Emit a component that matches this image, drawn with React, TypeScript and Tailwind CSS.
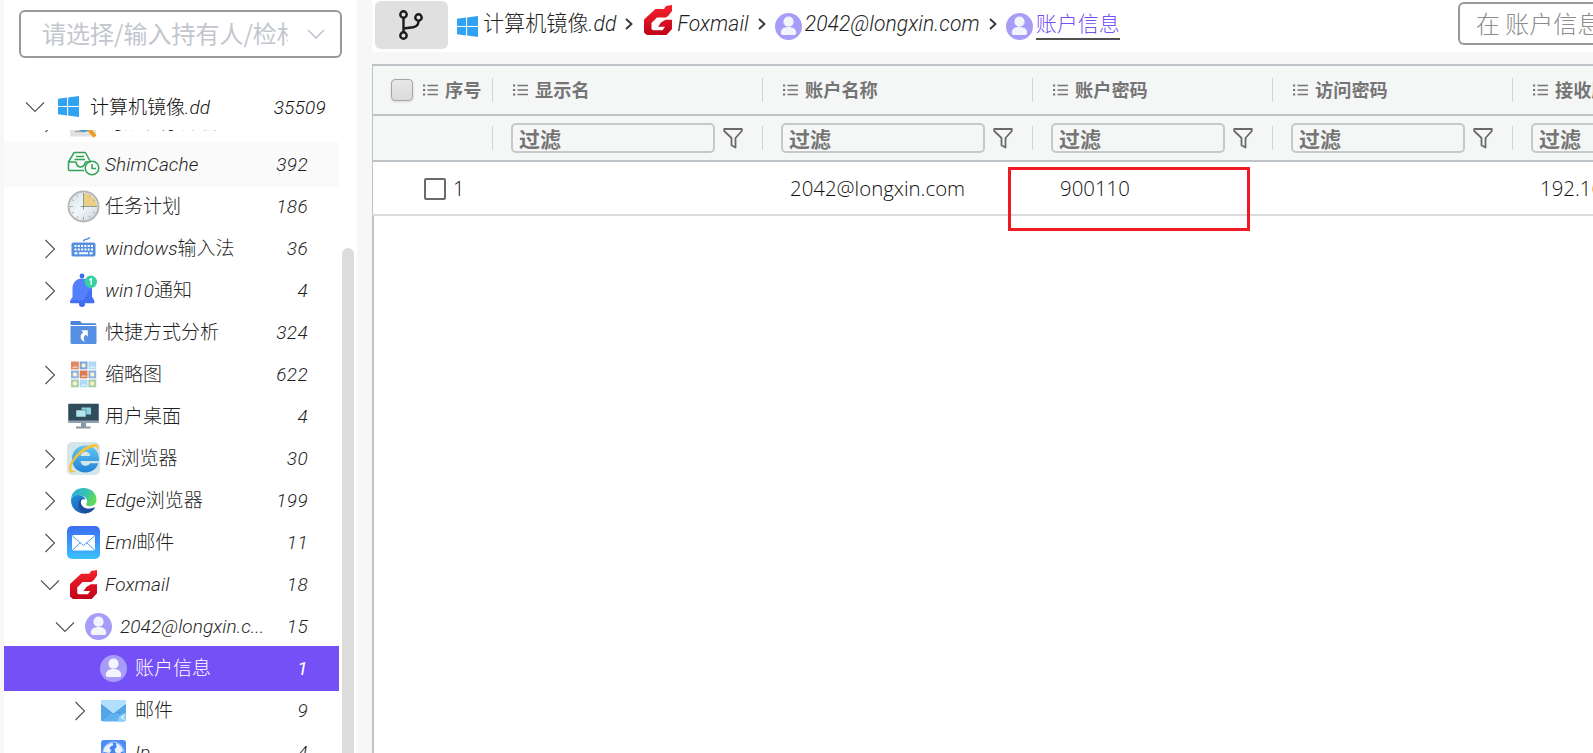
import React from "react";

const latin = "italic font-[350] tracking-[0.080px] font-['Roboto']";
const cjk = "not-italic font-light font-['Noto_Sans_CJK_SC','Noto_Sans',sans-serif]";

function Mixed({ text }: { text: string }) {
  const parts = text.match(/[\u4e00-\u9fff]+|[^\u4e00-\u9fff]+/g) || [];
  const lift = parts.length === 1 ? " relative -top-px" : "";
  return (
    <>
      {parts.map((p, i) => (
        <span key={i} className={/[\u4e00-\u9fff]/.test(p) ? cjk + lift : latin}>{p}</span>
      ))}
    </>
  );
}

function Windows({ className = "" }: { className?: string }) {
  return (
    <svg viewBox="0 0 22 22" className={"h-[21px] w-[21px] shrink-0 " + className} fill="#2fa3f2">
      <path d="M0 3 9.500 1.700V10.400H0zM10.600 1.500 22 0v10.400H10.600zM0 11.600h9.500v8.700L0 19zM10.600 11.600H22V22l-11.400-1.500z" />
    </svg>
  );
}

function Foxmail({ className = "h-[29px] w-[27px]" }: { className?: string }) {
  return (
    <svg viewBox="0 0 28 30" preserveAspectRatio="none" className={"shrink-0 " + className}>
      <defs>
        <linearGradient id="fx" x1="0" y1="0" x2="0" y2="1">
          <stop offset="0" stopColor="#f8232c" />
          <stop offset="1" stopColor="#bf0318" />
        </linearGradient>
      </defs>
      <path fill="url(#fx)" d="M28 0v6l-3.500 4.500L22 12.500h-9L7.500 18v6l1.500 1.200h9.500l2.500-3.500h-7L17 17.500l4.500-2.800H28V24l-5.500 6H3l-3-2.500V14.500L11.500 4H20l2-3z" />
    </svg>
  );
}

function User() {
  return (
    <svg viewBox="0 0 27 27" className="h-[27px] w-[27px] shrink-0">
      <circle cx="13.500" cy="13.500" r="13.500" fill="#a79df9" />
      <circle cx="13.500" cy="8.700" r="5.100" fill="#f4f5fc" />
      <path fill="#f4f5fc" d="M5.800 20c0-4 3.200-6 7.700-6s7.700 2 7.700 6c0 1.300-.7 2-2 2H7.800c-1.300 0-2-.7-2-2z" />
    </svg>
  );
}

function Scan() {
  return (
    <svg viewBox="0 0 33 33" className="h-[33px] w-[33px]">
      <rect x="3" y="3" width="26" height="27.500" fill="#e2e2e2" />
      <path d="M8 25.500h10" stroke="#aaa" strokeWidth="1.500" />
      <circle cx="17" cy="17.500" r="7" fill="#bfe6fa" stroke="#429bd8" strokeWidth="3" />
      <path d="m22 23.500 6 7" stroke="#f09a1f" strokeWidth="4" />
    </svg>
  );
}

function Shim() {
  return (
    <svg viewBox="0 0 33 33" className="h-[33px] w-[33px]" fill="none" stroke="#2fa457" strokeWidth="1.500" strokeLinejoin="round">
      <path d="M17 22.500H2.500q-1 0-1-1v-7.500L6.500 5.500q.4-1 1.500-1h9.500q1 0 1.500 1l4.500 8.500M1.500 14h7.500q1 5 4.500 5t5-5h5M9 8.500h8M7.500 11.500h10.500" />
      <circle cx="25" cy="20" r="6.800" />
      <path d="M25 16v4.500h4" />
    </svg>
  );
}

function Clock() {
  return (
    <svg viewBox="0 0 33 33" className="h-[33px] w-[33px]">
      <defs>
        <linearGradient id="ck" x1="0" y1="0" x2="1" y2="1">
          <stop offset="0" stopColor="#d2dee4" />
          <stop offset=".5" stopColor="#f2f7f9" />
          <stop offset="1" stopColor="#c2d0d8" />
        </linearGradient>
      </defs>
      <circle cx="16.500" cy="16.500" r="15" fill="url(#ck)" stroke="#b5b5b5" strokeWidth="1.800" />
      <path d="M16.500 16.500V3a13.500 13.500 0 0 1 13.500 13.500z" fill="#ebcf85" />
      <path d="M16.500 3v3M16.500 27v3M3 16.500h3M9.700 5l1 1.800M5 9.700l1.800 1M5 23.200l1.800-1M9.700 28l1-1.800M23.200 28l-1-1.800M28 23.200l-1.800-1M28 9.700l-1.800 1M23.200 5l-1 1.800" stroke="#9bacba" />
      <path d="M16.500 4v15.500M13.500 16.500H30" stroke="#7f868b" strokeWidth=".8" />
    </svg>
  );
}

function Keyboard() {
  return (
    <svg viewBox="0 0 33 33" className="h-[33px] w-[33px]">
      <path d="M16.500 9.500c0-3.500 6-1 6-4.500" fill="none" stroke="#5590e0" strokeWidth="1.300" />
      <rect x="4.500" y="10.500" width="24" height="14" rx="1.800" fill="#5590e0" />
      <path d="M7.500 14h19M7.500 17.500h19" stroke="#fff" strokeWidth="2" strokeDasharray="2 1.300" />
      <path d="M7.500 21.300h3M12 21.300h9M22.500 21.300h3" stroke="#fff" strokeWidth="2" />
    </svg>
  );
}

function Bell() {
  return (
    <svg viewBox="0 0 33 33" className="h-[33px] w-[33px] overflow-visible">
      <circle cx="15" cy="2" r="2.400" fill="#3e6cf0" />
      <circle cx="15" cy="30" r="3" fill="#3e6cf0" />
      <path d="M15 4.500c-6 0-9.500 4.500-9.500 10v8.500L3.500 26v3h23.500v-3l-2-3v-8.500c0-5.500-4-10-10-10z" fill="#5480fc" />
      <path d="M25 15v8l2 3v3H12c7 0 6.500-13 13-14z" fill="#3f68f3" opacity=".7" />
      <path d="M4 26.200h22.500q1 0 1 1.500t-1 1.500H4q-1 0-1-1.500t1-1.500z" fill="#4470f8" />
      <circle cx="23.800" cy="7.800" r="6.200" fill="#35d0a4" />
      <path d="m22.300 6.200 1.900-1.400v6.200" fill="none" stroke="#fff" strokeWidth="1.400" />
    </svg>
  );
}

function Shortcut() {
  return (
    <svg viewBox="0 0 33 33" className="h-[33px] w-[33px]">
      <path d="M3.500 9V6q0-1 1-1H13l2 2.200h13q1.500 0 1.500 1.800z" fill="#4a83d8" />
      <path d="M3.500 10h26v16.500q0 1.500-1.500 1.500H5q-1.500 0-1.500-1.500z" fill="#5590e2" />
      <path d="M18 26c-5.500-2-5.500-7.500-1.800-9.500l-1.900-2.200h6.500v6.500l-1.900-2c-2.300 1.500-2.900 4-.9 7.200z" fill="#fff" />
    </svg>
  );
}

function Thumbs() {
  const cells = [
    ["#e08a5c", "#7fa3dc", "#b0d9f5"],
    ["#8fb0e2", "#d97b4c", "#8fb0e2"],
    ["#a5cfa8", "#b0d9f5", "#a5cfa8"],
  ];
  return (
    <svg viewBox="0 0 33 33" className="h-[33px] w-[33px]">
      {cells.map((r, y) =>
        r.map((c, x) => (
          <g key={x + "-" + y} transform={`translate(${4 + x * 8.7} ${3.5 + y * 9})`}>
            <rect width="7.800" height="7.800" fill={c} />
            {(x === 1 && y === 0) || (y === 1 && x !== 1) || (y === 2 && x !== 1) ? (
              <circle cx="3.900" cy="3.900" r="2.200" fill="#fbf3c8" />
            ) : (
              <path d="M1 6.500 3.500 4l1.500 1.300 1-1 1 2.200z" fill="#fff" opacity=".5" />
            )}
          </g>
        ))
      )}
    </svg>
  );
}

function Desktop() {
  return (
    <svg viewBox="0 0 33 33" className="h-[33px] w-[33px]">
      <rect x="1" y="3.500" width="31" height="19.500" rx="1.200" fill="#90a1ad" />
      <path d="M1.500 4h30v16.500h-30z" fill="#304b5a" />
      <path d="M14 23h5v3.500h4.500v2H9v-2h5z" fill="#8697a3" />
      <rect x="14.500" y="7.500" width="9.500" height="7" fill="#8fd3e0" />
      <rect x="9" y="10" width="10" height="7" fill="#b2e4ee" stroke="#304b5a" strokeWidth=".5" />
    </svg>
  );
}

function IE() {
  return (
    <svg viewBox="0 0 33 33" className="h-[33px] w-[33px]">
      <defs>
        <linearGradient id="ie" x1="0" y1="0" x2="0" y2="1">
          <stop offset="0" stopColor="#62c8f5" />
          <stop offset="1" stopColor="#2381d6" />
        </linearGradient>
      </defs>
      <rect width="33" height="33" rx="5" fill="#d5e6ea" />
      <path fillRule="evenodd" fill="url(#ie)" d="M18.500 3.500c8 0 13.500 5.500 13.500 14v1.500H13.500c.3 3 2.300 4.700 5 4.700 2.200 0 3.800-.9 4.600-2.400h8.300c-1.900 5.800-6.800 9.200-12.900 9.200C10.500 30.500 5 25 5 17S10.500 3.500 18.500 3.500zM13.500 14h9.800c-.3-2.800-2.200-4.300-4.800-4.300S13.900 11.200 13.500 14z" />
      <path d="M9 28.800C3 32.500.3 29 3.300 22 6.500 14 16 5 24.500 2.800c5-1.500 7.500.2 6 4.700.2-3-2-3.500-5.500-2.200C17 8 8 15.500 5 22.500c-2.200 5.500-.5 7.500 4 6.300z" fill="#f9c532" stroke="#f6bd2a" strokeWidth=".4" />
    </svg>
  );
}

function Edge() {
  return (
    <svg viewBox="0 0 33 33" className="h-[33px] w-[33px]">
      <defs>
        <linearGradient id="eg" x1="0" y1="0" x2="1" y2=".4">
          <stop offset="0" stopColor="#2aa9e0" />
          <stop offset=".6" stopColor="#35c1b5" />
          <stop offset="1" stopColor="#5fdb5a" />
        </linearGradient>
        <linearGradient id="eb" x1="0" y1="0" x2="1" y2="1">
          <stop offset="0" stopColor="#2493e0" />
          <stop offset="1" stopColor="#15499a" />
        </linearGradient>
      </defs>
      <path d="M4 14.500C5 8 10 4 16.500 4 24 4 29.500 9 29.500 15.500c0 4.500-3 6.700-6.500 6.700-3 0-4.500-1.200-3.500-2.700 1.500-2 .5-6-4-7.500S6 11 4 14.500z" fill="url(#eg)" />
      <path d="M4 15c2-4 7-5 11-3 2 1 3.500 2.500 3.500 3.500-3.500-1-5.500 1-4.500 4.500 1.200 4 6 5.500 10.500 4.500 1.500-.4 2.700-1 3.500-1.200C26 27 21.500 29.800 16.500 29.500 9 29 3.500 23 4 15z" fill="url(#eb)" />
      <path d="M15 14c-3 2-4.500 6-3 10 1.500 3.500 4.500 5.500 7.500 5.200 4-.5 7-3 8.500-5.700-6 2.700-13 1.200-14-4-.3-2 .1-3.700 1-5.500z" fill="#1d4fa0" />
    </svg>
  );
}

function Eml() {
  return (
    <svg viewBox="0 0 33 33" className="h-[33px] w-[33px]">
      <defs>
        <linearGradient id="em" x1="0" y1="0" x2="0" y2="1">
          <stop offset="0" stopColor="#3c6cf0" />
          <stop offset="1" stopColor="#3bc0fb" />
        </linearGradient>
      </defs>
      <rect width="33" height="33" rx="5" fill="url(#em)" />
      <rect x="5" y="9" width="23" height="15.500" rx="1.500" fill="#fff" />
      <path d="m5.500 10 11 9.500L27.500 10M5.500 24l8-7.500M27.500 24l-8-7.500" fill="none" stroke="#4a9af8" strokeWidth="1" />
    </svg>
  );
}

function Mail() {
  return (
    <svg viewBox="0 0 27 27" className="h-[27px] w-[27px]">
      <rect x="1" y="3" width="25" height="21.500" rx="2.500" fill="#5fb2ef" />
      <path d="M1 7v16l9-8zM26 7v16l-9-8z" fill="#54a8ea" />
      <path d="M1 7.500V5.500Q1 3 3.500 3h20Q26 3 26 5.500v2L13.500 17z" fill="#b0e0fd" />
      <path d="m1 7.500 12.500 9.700L26 7.500M1.500 23.500l8.500-8M26 20l-9-5" fill="none" stroke="#3b90d6" strokeWidth=".9" />
      <path d="M26 16v6q0 2.500-2.500 2.500H18c0-5 3-8 8-8.500z" fill="#8fd0f8" />
      <path d="m24.500 18.500-3.500 2 3.500 2" fill="none" stroke="#fff" />
    </svg>
  );
}

function Ip() {
  return (
    <svg viewBox="0 0 27 27" className="h-[27px] w-[27px]">
      <rect x="1" y="1" width="25" height="25" rx="3" fill="#4f8df5" />
      <circle cx="13.500" cy="13.500" r="10.500" fill="#4283f0" stroke="#a9cbff" strokeWidth="1" />
      <path d="M3.500 13c0-5 4-8.500 9-9l1 2-3 1.500-1 2.500 2 1-2 3-3-.5zM16 4c3.500 1 6.500 4 7 8l-3.500 2.500-4-1-1-3.500 2-1.500z" fill="#e8f2ff" />
    </svg>
  );
}

function Chevron({ open }: { open: boolean }) {
  return (
    <svg viewBox="0 0 20 20" className="h-5 w-5 shrink-0" fill="none" stroke="#505050" strokeWidth="1.100">
      <path d={open ? "M1 5.500 10 14.500 19 5.500" : "M5.500 1 14.500 10 5.500 19"} />
    </svg>
  );
}

type Node = { level: number; open?: boolean; icon: React.ReactNode; name: string; count?: number; active?: boolean; hover?: boolean };

const nodes: Node[] = [
  { level: 0, open: false, icon: <Scan />, name: "可疑程序分析" },
  { level: 0, icon: <Shim />, name: "ShimCache", count: 392, hover: true },
  { level: 0, icon: <Clock />, name: "任务计划", count: 186 },
  { level: 0, open: false, icon: <Keyboard />, name: "windows输入法", count: 36 },
  { level: 0, open: false, icon: <Bell />, name: "win10通知", count: 4 },
  { level: 0, icon: <Shortcut />, name: "快捷方式分析", count: 324 },
  { level: 0, open: false, icon: <Thumbs />, name: "缩略图", count: 622 },
  { level: 0, icon: <Desktop />, name: "用户桌面", count: 4 },
  { level: 0, open: false, icon: <IE />, name: "IE浏览器", count: 30 },
  { level: 0, open: false, icon: <Edge />, name: "Edge浏览器", count: 199 },
  { level: 0, open: false, icon: <Eml />, name: "Eml邮件", count: 11 },
  { level: 0, open: true, icon: <Foxmail />, name: "Foxmail", count: 18 },
  { level: 1, open: true, icon: <User />, name: "2042@longxin.c...", count: 15 },
  { level: 2, icon: <User />, name: "账户信息", count: 1, active: true },
  { level: 2, open: false, icon: <Mail />, name: "邮件", count: 9 },
  { level: 2, icon: <Ip />, name: "Ip", count: 4 },
];

const indent = ["pl-9", "pl-[51px]", "pl-[66px]"];

function TreeRow({ n }: { n: Node }) {
  return (
    <div
      className={
        "-mb-[3px] flex h-[45px] w-[335px] shrink-0 items-center pr-[31px] text-[19px] " +
        indent[n.level] +
        (n.active ? " bg-[#7550f7] text-white" : n.hover ? " bg-[#fafafa] text-[#1f1f1f]" : " text-[#1f1f1f]")
      }
    >
      <div className="w-5 shrink-0">{n.open !== undefined && <Chevron open={n.open} />}</div>
      <div className="ml-[7px] flex w-[33px] shrink-0 justify-center">{n.icon}</div>
      <div className={"-mt-px ml-[5px] flex-1 whitespace-nowrap leading-[28px]" + (n.active ? " font-normal" : "")}><Mixed text={n.name} /></div>
      <div className={"mt-0.5 font-['Roboto'] italic tracking-[0.350px] " + (n.active ? "font-normal" : "font-[350]")}>{n.count}</div>
    </div>
  );
}

function ListIcon() {
  return (
    <svg viewBox="0 0 15 12" className="h-3 w-[15px] shrink-0" stroke="#757575" strokeWidth="1.500">
      <path d="M4.500 1.500H15M4.500 6H15M4.500 10.500H15" />
      <path d="M0 1.500h2.200M0 6h2.200M0 10.500h2.200" strokeWidth="2.200" />
    </svg>
  );
}

function Funnel() {
  return (
    <svg viewBox="0 0 20 21" className="ml-2 h-[21px] w-5 shrink-0" fill="none" stroke="#6a6a6a" strokeWidth="1.800" strokeLinejoin="round">
      <path d="M1.200 1h17.600v2L12.500 10v9.500l-4-2.300V10L1.200 3z" />
    </svg>
  );
}

function Sep() {
  return <i className="h-6 w-px shrink-0 bg-[#ced4d8]" />;
}

const columns = [
  { name: "显示名", w: "w-[270px]" },
  { name: "账户名称", w: "w-[270px]" },
  { name: "账户密码", w: "w-[240px]" },
  { name: "访问密码", w: "w-[240px]" },
  { name: "接收服务器", w: "w-[240px]" },
];

const values = ["", "2042@longxin.com", "900110", "", "192.168.1.1"];

function Crumb({ children, className = "" }: { children: React.ReactNode; className?: string }) {
  return <span className={"-mt-0.5 whitespace-nowrap text-[21.100px] leading-[30px] text-[#1f1f1f] " + className}>{children}</span>;
}

function Arrow() {
  return (
    <svg viewBox="0 0 8 12" className="mx-[9px] h-3 w-2 shrink-0" fill="none" stroke="#333" strokeWidth="1.800">
      <path d="m1 1 5.500 5L1 11" />
    </svg>
  );
}

export default function App() {
  return (
    <div className="flex h-[753px] w-[1593px] overflow-hidden bg-[#f7f7f7] pl-1 font-['Noto_Sans_CJK_SC',sans-serif]">
      <aside className="relative flex w-[353px] shrink-0 flex-col bg-white">
        <div className="ml-[15px] mt-2.5 flex h-12 w-[323px] shrink-0 items-center rounded-md border-2 border-[#999] pl-[21px]">
          <div className="-mt-0.5 w-[246px] overflow-hidden whitespace-nowrap text-[24px] leading-[36px] text-[#c3c6ce]">
            请选择/输入持有人/检材
          </div>
          <svg viewBox="0 0 18 10" className="ml-[19px] h-2.5 w-[18px]" fill="none" stroke="#b9bcc6" strokeWidth="1.300">
            <path d="m1 1 8 8 8-8" />
          </svg>
        </div>
        <div className="mt-[26px] flex h-[45px] w-[322px] shrink-0 items-center pl-[21px] text-[19px] text-[#111]">
          <Chevron open />
          <Windows className="ml-[13px]" />
          <div className="ml-[11px] flex-1 whitespace-nowrap leading-[28px]"><Mixed text="计算机镜像.dd" /></div>
          <span className="mt-[3px] font-['Roboto'] font-[350] italic tracking-[0.250px]">35509</span>
        </div>
        <div className="mt-px flex flex-1 flex-col overflow-hidden">
          <div className="-mt-[30px] flex flex-col">
            {nodes.map((n, i) => <TreeRow key={i} n={n} />)}
          </div>
        </div>
        <div className="absolute left-[338px] top-[248px] h-[520px] w-3 rounded-full bg-[#dcdcdc]" />
      </aside>

      <main className="ml-[15px] flex w-[1221px] shrink-0 flex-col overflow-hidden">
        <header className="flex h-[52px] shrink-0 items-start bg-white">
          <button className="ml-[3px] mt-px flex h-12 w-[73px] shrink-0 items-center justify-center rounded-md bg-[#e0e0e0]">
            <svg viewBox="0 0 24 30" className="mr-px h-[30px] w-6" fill="none" stroke="#1a1a1a" strokeWidth="2.400">
              <circle cx="4.500" cy="4.500" r="3.200" />
              <circle cx="4.500" cy="25.500" r="3.200" />
              <circle cx="19.500" cy="7.500" r="3.200" />
              <path d="M4.500 8v14M4.500 18.500l9.500-1.300q5.500-.9 5.500-6" />
            </svg>
          </button>
          <div className="ml-[9px] flex h-12 items-center">
            <Windows className="mt-1" />
            <Crumb className="ml-[5px]"><Mixed text="计算机镜像.dd" /></Crumb>
            <Arrow />
            <Foxmail className="ml-0.5 -mt-2 h-[30px] w-7" />
            <Crumb className="ml-[5px]"><Mixed text="Foxmail" /></Crumb>
            <Arrow />
            <span className="mt-1"><User /></span>
            <Crumb className="ml-[3px]"><Mixed text="2042@longxin.com" /></Crumb>
            <Arrow />
            <span className="mt-1"><User /></span>
            <span className="-mt-px ml-[3px] h-8 whitespace-nowrap border-b-2 border-[#505050] text-[21px] font-light leading-[28px] text-[#7550f7]">账户信息</span>
          </div>
          <div className="ml-auto mt-0.5 flex h-[43px] w-[135px] shrink-0 items-center overflow-hidden whitespace-nowrap rounded-l-md border-2 border-r-0 border-[#999] pb-0.5 pl-4 text-[24px] font-light leading-[36px] text-[#8c8c8c]">
            在 账户信息
          </div>
        </header>

        <section className="mt-3 flex flex-1 flex-col border-t-2 border-[#bdc3c7] bg-white">
          <div className="flex h-12 shrink-0 items-center border-l border-[#bdc3c7] bg-[#f5f7f7] text-[18.200px] font-bold text-[#757575]">
            <div className="flex w-[120px] shrink-0 items-center pl-[18px]">
              <span className="h-[22px] w-[22px] shrink-0 rounded border-[1.500px] border-[#a5a5a5] bg-gradient-to-b from-[#e8e8e8] to-[#dadada] shadow-sm" />
              <span className="ml-2.5"><ListIcon /></span>
              <span className="ml-[7px] flex-1 whitespace-nowrap">序号</span>
              <Sep />
            </div>
            {columns.map((c) => (
              <div key={c.name} className={"flex shrink-0 items-center pl-5 " + c.w}>
                <ListIcon />
                <span className="ml-[7px] flex-1 whitespace-nowrap">{c.name}</span>
                <Sep />
              </div>
            ))}
          </div>
          <div className="flex h-12 shrink-0 items-center border-y-2 border-l border-[#bdc3c7] bg-[#f5f7f7]">
            <div className="flex w-[120px] shrink-0 justify-end"><Sep /></div>
            {columns.map((c) => (
              <div key={c.name} className={"flex shrink-0 items-center pl-[18px] " + c.w}>
                <div className="flex h-[30px] flex-1 items-center overflow-hidden rounded-[5px] border-2 border-[#c6c9c9] pl-1.5 text-[21px] font-bold leading-[26px] text-[#757575]">
                  过滤
                </div>
                <Funnel />
                <span className="ml-[19px] flex"><Sep /></span>
              </div>
            ))}
          </div>
          <div className="relative flex h-[54px] shrink-0 items-center border-b-2 border-l border-b-[#d9dcde] border-l-[#bdc3c7] text-[20.400px] font-[350] text-[#111] font-['Open_Sans']">
            <div className="flex w-[120px] shrink-0 items-center pl-[51px]">
              <span className="mt-0.5 h-[22px] w-[22px] rounded-[2px] border-2 border-[#6b6b6b]" />
              <span className="ml-[7px]">1</span>
            </div>
            {columns.map((c, i) => (
              <div key={c.name} className={"shrink-0 whitespace-nowrap pl-[27px] " + c.w}>{values[i]}</div>
            ))}
            <div className="absolute left-[635px] top-[5px] h-16 w-[242px] border-[3px] border-[#f01a22]" />
          </div>
          <div className="flex-1 border-l-2 border-[#bdc3c7]" />
        </section>
      </main>
    </div>
  );
}
